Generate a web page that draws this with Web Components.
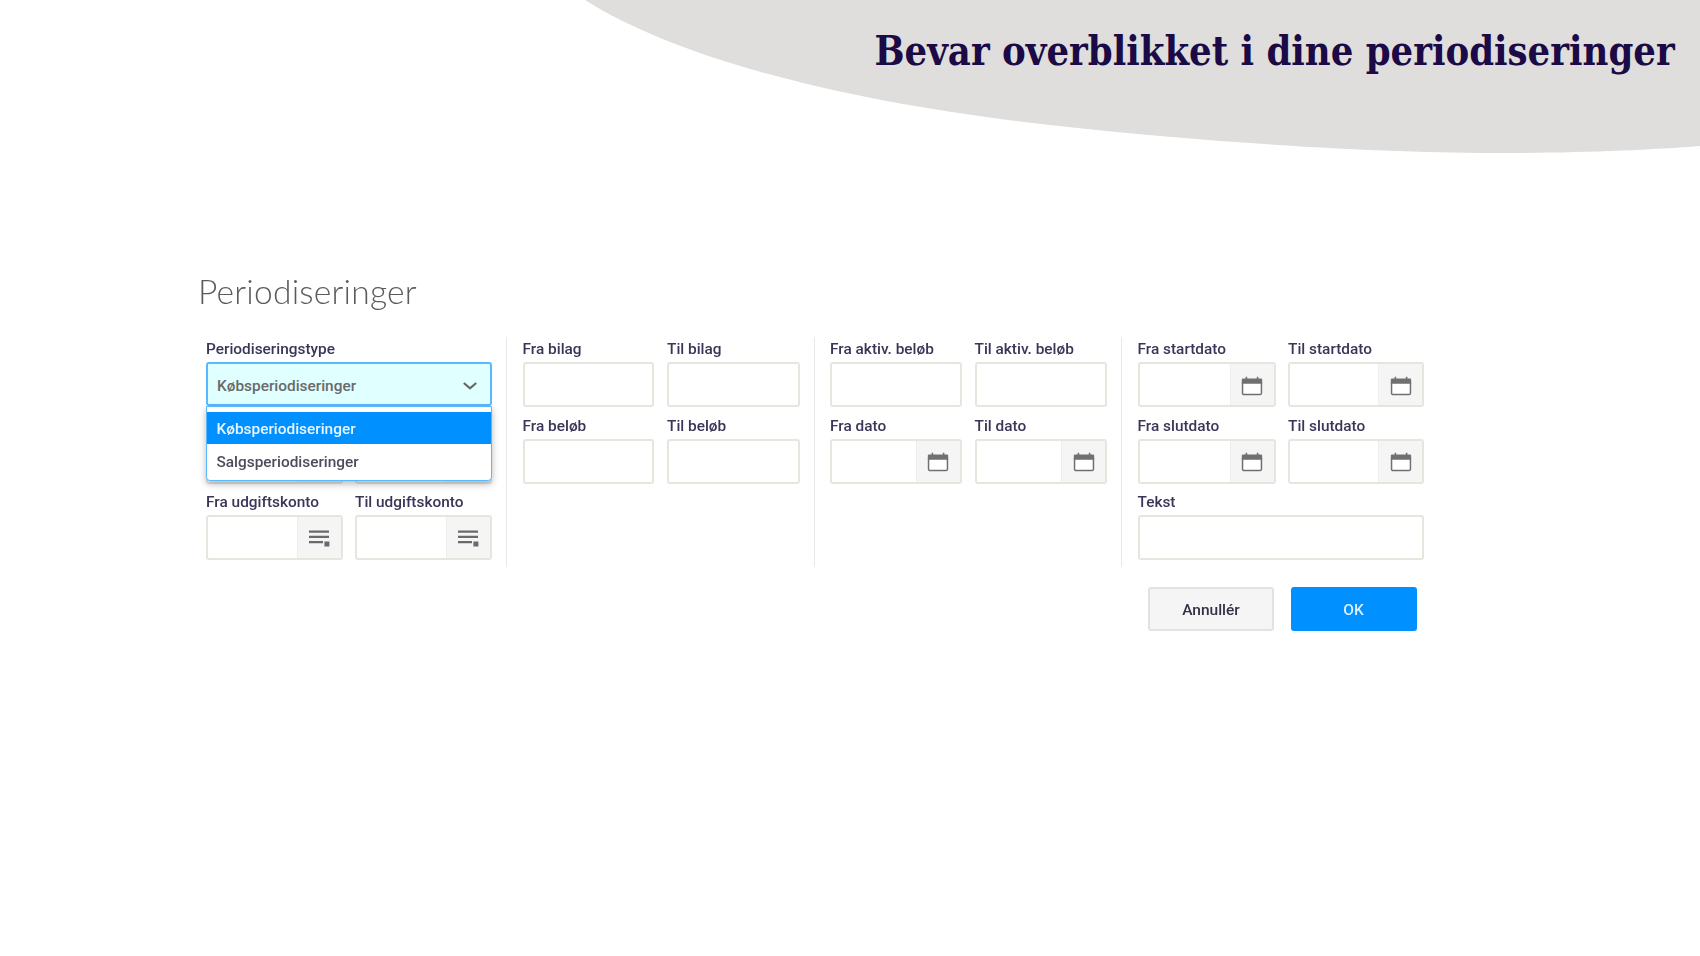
<!DOCTYPE html>
<html lang="da"><head><meta charset="utf-8"><title>Periodiseringer</title>
<style>
html,body{margin:0;padding:0;background:#fff;width:1700px;height:956px;overflow:hidden}
</style></head><body>
<slide-page>
  <slide-banner slot="banner">Bevar overblikket i dine periodiseringer</slide-banner>
  <filter-dialog heading="Periodiseringer">
    <filter-column>
      <filter-field label="Periodiseringstype" span="2" kind="select" value="Købsperiodiseringer"></filter-field>
      <filter-field kind="list"></filter-field>
      <filter-field kind="list"></filter-field>
      <filter-field label="Fra udgiftskonto" kind="list"></filter-field>
      <filter-field label="Til udgiftskonto" kind="list"></filter-field>
    </filter-column>
    <filter-column>
      <filter-field label="Fra bilag"></filter-field>
      <filter-field label="Til bilag"></filter-field>
      <filter-field label="Fra beløb"></filter-field>
      <filter-field label="Til beløb"></filter-field>
    </filter-column>
    <filter-column>
      <filter-field label="Fra aktiv. beløb"></filter-field>
      <filter-field label="Til aktiv. beløb"></filter-field>
      <filter-field label="Fra dato" kind="date"></filter-field>
      <filter-field label="Til dato" kind="date"></filter-field>
    </filter-column>
    <filter-column last>
      <filter-field label="Fra startdato" kind="date"></filter-field>
      <filter-field label="Til startdato" kind="date"></filter-field>
      <filter-field label="Fra slutdato" kind="date"></filter-field>
      <filter-field label="Til slutdato" kind="date"></filter-field>
      <filter-field label="Tekst" span="2"></filter-field>
    </filter-column>
    <dialog-button slot="actions">Annullér</dialog-button>
    <dialog-button slot="actions" primary>OK</dialog-button>
  </filter-dialog>
</slide-page>
<script>
const def=(name,html,extra={})=>{
  const t=document.createElement('template');t.innerHTML=html;
  customElements.define(name,class extends HTMLElement{
    connectedCallback(){
      if(this.shadowRoot)return;
      this.attachShadow({mode:'open'}).appendChild(t.content.cloneNode(true));
      if(extra.init)extra.init(this,this.shadowRoot);
    }
  });
};
def('slide-page',`<style>
:host{display:block;position:relative;width:1700px;height:956px;font-family:Roboto,"Liberation Sans",sans-serif}
main{display:flex;flex-direction:column}
</style><main><slot name="banner"></slot><slot></slot></main>`);

def('slide-banner',`<style>
:host{display:block;position:relative;height:153px}
svg{position:absolute;left:0;top:0}
h1{position:relative;margin:0;padding:25px 25px 0 0;text-align:right;font:700 41.5px/52px "DejaVu Serif",serif;font-stretch:condensed;color:#1b0a45;white-space:nowrap}
span{display:inline-block;transform:scaleX(.953);transform-origin:100% 50%}
</style>
<svg width="1700" height="153" viewBox="0 0 1700 153" aria-hidden="true"><path fill="#dfdedd" d="M585 0C680 60 850 103 1050 125C1240 146 1400 153 1500 153C1580 153 1650 150 1700 146V0Z"/></svg>
<h1><span><slot></slot></span></h1>`);

def('filter-dialog',`<style>
:host{display:block;padding:117px 0 0 198px;filter:blur(.35px)}
h2{margin:0;font:300 33.6px/42px Lato,"Open Sans",sans-serif;color:#5b5b5b;letter-spacing:.2px}
.cols{display:flex;margin:25px 0 0 8px;align-items:stretch}
.actions{display:flex;gap:16.5px;margin:20px 0 0 950px}
</style>
<h2></h2>
<div class="cols"><slot></slot></div>
<div class="actions"><slot name="actions"></slot></div>`,{init(h,s){s.querySelector('h2').textContent=h.getAttribute('heading')}});

def('filter-column',`<style>
:host{display:grid;grid-template-columns:var(--a,131.5px) var(--b,132.5px);column-gap:13px;grid-auto-rows:76.5px;
 padding:0 14px 0 0;margin-right:15.5px;border-right:1.5px solid #e9e9e6;height:230px;align-content:start;flex:none}
:host([last]){border-right:0;margin:0;padding:0;--a:138px;--b:136px;column-gap:12.5px}
:host(:first-child){--a:136.5px;--b:137px;column-gap:12.5px}
</style><slot></slot>`);

const cal=`<svg width="22" height="20" viewBox="0 0 22 20" aria-hidden="true"><path fill="#707070" d="M.8 3.6a1.2 1.2 0 0 1 1.2-1.2h2.6V.8h1.6v1.6h9.6V.8h1.6v1.6H20a1.2 1.2 0 0 1 1.2 1.2V7.4H.8Z"/><path fill="#fff" stroke="#707070" stroke-width="1.5" d="M1.55 7v10.2a1.4 1.4 0 0 0 1.4 1.4h16.1a1.4 1.4 0 0 0 1.4-1.4V7Z"/></svg>`;
const list=`<svg width="21" height="17" viewBox="0 0 21 17" aria-hidden="true"><path fill="#6a6a6a" d="M0 .6h20v2.2H0zM0 5.8h20V8H0zM0 11h14v2.2H0z"/><path fill="#6a6a6a" d="M15.4 11.4h5v5h-5z"/></svg>`;
const chev=`<svg width="14" height="8" viewBox="0 0 14 8" aria-hidden="true"><path fill="none" stroke="#666" stroke-width="2.2" d="M.8 1 7 6.4 13.2 1"/></svg>`;

def('filter-field',`<style>
:host{display:block;position:relative;min-width:0}
:host([span="2"]){grid-column:span 2}
label{display:block;height:25px;font:500 15.4px/25px Roboto,"Liberation Sans",sans-serif;color:#3a3658;white-space:nowrap}
.box{display:flex;height:45px;box-sizing:border-box;border:2px solid #e6e6df;border-radius:3px;background:#fff;overflow:hidden}
.val{flex:1;min-width:0}
.add{flex:none;width:44px;display:flex;align-items:center;justify-content:center;padding-top:2px;box-sizing:border-box;background:#f5f5f5;border-left:1px solid #eeeeea}
</style><label></label><div class="box"><div class="val"></div></div>`,{init(h,s){
  s.querySelector('label').textContent=h.getAttribute('label')||'';
  const kind=h.getAttribute('kind');
  const box=s.querySelector('.box');
  if(kind==='date'||kind==='list'){
    const a=document.createElement('div');a.className='add '+kind;a.innerHTML=kind==='date'?cal:list;box.appendChild(a);
  }
  if(kind==='select'){
    const v=h.getAttribute('value');
    box.remove();
    const e=document.createElement('select-open');e.setAttribute('value',v);
    e.setAttribute('options','Købsperiodiseringer|Salgsperiodiseringer');
    s.appendChild(e);
  }
}});

def('select-open',`<style>
:host{display:block;position:relative;z-index:5;font:500 15.4px/24px Roboto,"Liberation Sans",sans-serif}
.head{height:44px;box-sizing:border-box;border:2px solid #5ab8ff;border-radius:3px;background:#e0ffff;color:#6a6a6a;display:flex;align-items:center;justify-content:space-between;padding:4px 13px 0 9px}
.menu{position:absolute;left:0;right:0;top:44px;height:74.5px;box-sizing:border-box;border:1.5px solid #5ab8ff;border-radius:0 0 4px 4px;background:#fff;padding-top:4.5px;box-shadow:0 3px 7px rgba(0,0,0,.28);color:#4e4c5c}
.o{height:32.5px;line-height:37px;padding-left:9.5px}
.o.on{background:#0090ff;color:#e8f5ff;line-height:35px}
</style><div class="head"><span class="v"></span>${chev}</div><div class="menu"></div>`,{init(h,s){
  s.querySelector('.v').textContent=h.getAttribute('value');
  const m=s.querySelector('.menu');
  h.getAttribute('options').split('|').forEach((t,i)=>{const d=document.createElement('div');d.className='o'+(i?'':' on');d.textContent=t;m.appendChild(d)});
}});

def('dialog-button',`<style>
:host{display:flex;align-items:center;justify-content:center;width:126px;height:44px;box-sizing:border-box;border:2px solid #e2e2de;border-radius:3px;background:#f5f5f5;color:#333146;font:500 15.5px/1 Roboto,"Liberation Sans",sans-serif;padding-top:4px}
:host([primary]){background:#0090ff;border-color:#0090ff;color:#dcefff}
</style><slot></slot>`);
</script>
</body></html>
